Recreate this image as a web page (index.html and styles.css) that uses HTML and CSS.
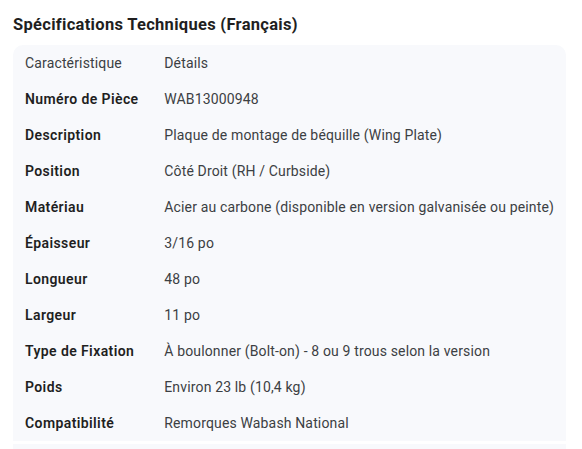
FILE: index.html
```html
<!DOCTYPE html>
<html lang="fr">
<head>
<meta charset="utf-8">
<link rel="stylesheet" href="styles.css">
</head>
<body>
<h2 class="title">Spécifications Techniques (Français)</h2>
<div class="table-wrap">
<table class="specs">
<thead>
<tr><th>Caractéristique</th><th>Détails</th></tr>
</thead>
<tbody>
<tr><td class="label">Numéro de Pièce</td><td>WAB13000948</td></tr>
<tr><td class="label">Description</td><td>Plaque de montage de béquille (Wing Plate)</td></tr>
<tr><td class="label">Position</td><td>Côté Droit (RH / Curbside)</td></tr>
<tr><td class="label">Matériau</td><td>Acier au carbone (disponible en version galvanisée ou peinte)</td></tr>
<tr><td class="label">Épaisseur</td><td>3/16 po</td></tr>
<tr><td class="label">Longueur</td><td>48 po</td></tr>
<tr><td class="label">Largeur</td><td>11 po</td></tr>
<tr><td class="label">Type de Fixation</td><td>À boulonner (Bolt-on) - 8 ou 9 trous selon la version</td></tr>
<tr><td class="label">Poids</td><td>Environ 23 lb (10,4 kg)</td></tr>
<tr><td class="label">Compatibilité</td><td>Remorques Wabash National</td></tr>
</tbody>
</table>
</div>
<div class="next"></div>
</body>
</html>
```
FILE: styles.css
```css
html, body {
  margin: 0;
  background: #ffffff;
}
body {
  padding: 13px 16px 0 13px;
  font-family: Roboto, "Noto Sans", sans-serif;
  color: #1f1f1f;
}
.title {
  margin: 0 0 8px 0;
  font-size: 16.5px;
  line-height: 24px;
  font-weight: 700;
  letter-spacing: 0.3px;
  color: #1f1f1f;
}
.table-wrap {
  background: #f8f9fc;
  border-radius: 10px 10px 0 0;
  overflow: hidden;
}
.specs {
  border-collapse: collapse;
  width: 100%;
  font-size: 14px;
  letter-spacing: 0.15px;
}
.specs th, .specs td {
  height: 36px;
  padding: 0 12px;
  text-align: left;
  vertical-align: middle;
  white-space: nowrap;
}
.specs th {
  font-weight: 400;
  color: #3c4043;
}
.specs th:first-child, .specs td:first-child {
  width: 116px;
}
.specs td {
  color: #3c4043;
}
.specs td.label {
  font-weight: 600;
  letter-spacing: 0.4px;
  color: #1f1f1f;
}
.next {
  margin-top: 3px;
  height: 10px;
  background: #f8f9fc;
}
```
